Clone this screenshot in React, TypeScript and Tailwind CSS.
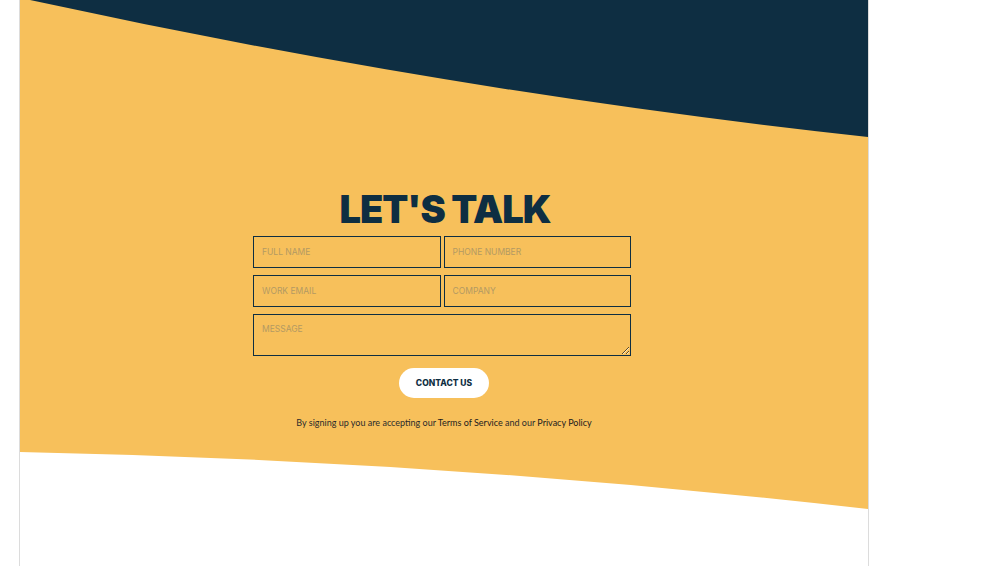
export default function App() {
  return (
    <div className="min-h-[566px] bg-white">
      <div className="ml-[19px] h-[566px] w-[850px] overflow-hidden border-x border-[#dcdcdc] bg-white">
        {/* Contact section */}
        <section className="relative h-[510px] bg-[#f7c05b] pt-[190px]">
          <svg className="absolute left-0 top-0 h-[138px] w-[848px]" viewBox="0 0 848 138" preserveAspectRatio="none">
            <path d="M10 0 Q430 91.5 848 137 L848 0 Z" fill="#0e2e42" />
          </svg>
          <svg className="absolute bottom-0 left-0 h-[58px] w-[848px]" viewBox="0 0 848 58" preserveAspectRatio="none">
            <path d="M0 0 Q424 8.5 848 57 L848 58 L0 58 Z" fill="#ffffff" />
          </svg>

          <div className="relative flex flex-col items-center">
            <h1 className="mb-2 ml-[2px] font-['Inter'] text-[38px] font-black leading-none tracking-[-1px] text-[#0e2e42]">
              LET'S TALK
            </h1>

            <form className="mr-[4px] flex w-[378px] flex-col gap-[7px]" onSubmit={e => e.preventDefault()}>
              <div className="grid grid-cols-2 gap-[3px]">
                <input
                  type="text"
                  placeholder="FULL NAME"
                  className="h-[32px] border border-[#0e2e42] bg-transparent px-[8px] font-['Inter'] text-[8.5px] text-[#0e2e42] outline-none placeholder:text-[#b39a63]"
                />
                <input
                  type="text"
                  placeholder="PHONE NUMBER"
                  className="h-[32px] border border-[#0e2e42] bg-transparent px-[8px] font-['Inter'] text-[8.5px] text-[#0e2e42] outline-none placeholder:text-[#b39a63]"
                />
              </div>
              <div className="grid grid-cols-2 gap-[3px]">
                <input
                  type="email"
                  placeholder="WORK EMAIL"
                  className="h-[32px] border border-[#0e2e42] bg-transparent px-[8px] font-['Inter'] text-[8.5px] text-[#0e2e42] outline-none placeholder:text-[#b39a63]"
                />
                <input
                  type="text"
                  placeholder="COMPANY"
                  className="h-[32px] border border-[#0e2e42] bg-transparent px-[8px] font-['Inter'] text-[8.5px] text-[#0e2e42] outline-none placeholder:text-[#b39a63]"
                />
              </div>
              <textarea
                placeholder="MESSAGE"
                className="block h-[42px] border border-[#0e2e42] bg-transparent px-[8px] pt-[8px] font-['Inter'] text-[8.5px] text-[#0e2e42] outline-none placeholder:text-[#b39a63]"
              />

              <button
                type="submit"
                className="mx-auto mt-[5px] h-[30px] w-[90px] translate-x-[2px] rounded-full bg-white font-['Inter'] text-[8.5px] font-extrabold text-[#0e2e42]"
              >
                CONTACT US
              </button>
            </form>

            <p className="mt-[19px] font-['Lato'] text-[9px] leading-[12px] text-[#2b2b2b]">
              By signing up you are accepting our <a className="text-[#1b1b1b]">Terms of Service</a> and our{" "}
              <a className="text-[#1b1b1b]">Privacy Policy</a>
            </p>
          </div>
        </section>
      </div>
    </div>
  );
}
